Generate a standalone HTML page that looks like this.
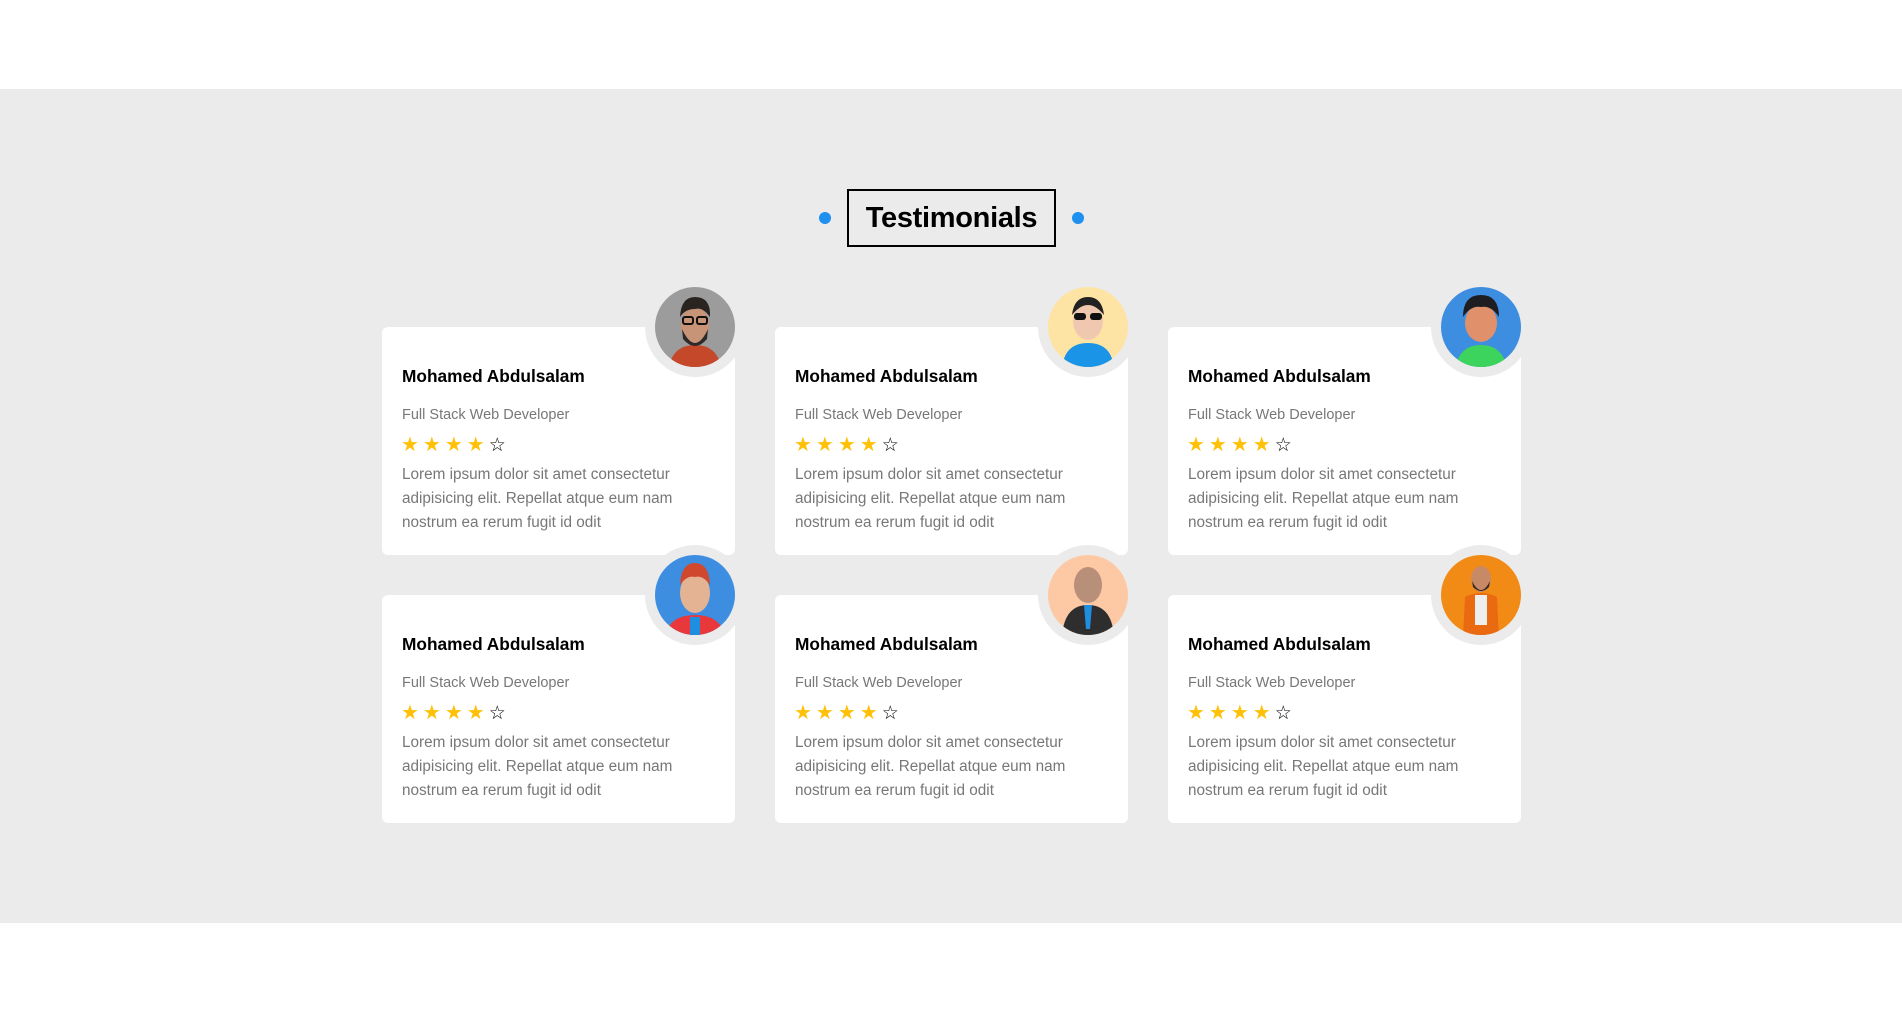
<!DOCTYPE html>
<html><head><meta charset="utf-8"><style>
*{margin:0;padding:0;box-sizing:border-box}
body{width:1902px;height:1022px;background:#fff;font-family:"Liberation Sans",sans-serif;position:relative;overflow:hidden}
.sec{position:absolute;left:0;top:89px;width:1902px;height:834px;background:#ebebeb}
.title{position:absolute;left:847px;top:189px;width:209px;height:58px;border:2px solid #000;font-size:29px;font-weight:bold;text-align:center;line-height:54px;color:#000;letter-spacing:-0.3px}
.dot{position:absolute;width:12px;height:12px;border-radius:50%;background:#1e90f0;top:212px}
.card{position:absolute;width:353px;height:228px;background:#fff;border-radius:6px}
.ring{position:absolute;left:263px;top:-50px;width:100px;height:100px;border-radius:50%;background:#ebebeb}
.ring svg{position:absolute;left:10px;top:10px}
.name{position:absolute;left:20px;top:39px;font-size:17.3px;font-weight:bold;color:#000}
.job{position:absolute;left:20px;top:80px;font-size:14.5px;color:#777}
.stars{position:absolute;left:19px;top:107px;font-size:20px;letter-spacing:4px;color:#ffc107;line-height:22px}
.stars b{color:#000;font-weight:normal;font-size:19px}
.p{position:absolute;left:20px;top:136px;width:290px;font-size:15.3px;line-height:24px;color:#777}
</style></head><body>
<div class="sec"></div>
<div class="dot" style="left:819px"></div>
<div class="title">Testimonials</div>
<div class="dot" style="left:1072px"></div>

<div class="card" style="left:382px;top:327px">
<div class="ring"><svg width="80" height="80" viewBox="0 0 80 80"><defs><clipPath id="c1"><circle cx="40" cy="40" r="40"/></clipPath></defs><g clip-path="url(#c1)"><rect width="80" height="80" fill="#9c9c9c"/><path d="M14 80 Q18 58 40 58 Q62 58 66 80Z" fill="#c5482b"/><ellipse cx="40" cy="38" rx="14" ry="18" fill="#c89477"/><path d="M27 42 Q40 70 53 42 L52 52 Q40 66 28 52Z" fill="#2d2a28"/><path d="M25 30 Q26 10 40 10 Q56 10 55 30 Q48 20 40 22 Q30 22 25 30Z" fill="#2a2420"/><rect x="28" y="30" width="10" height="7" rx="2" fill="none" stroke="#111" stroke-width="2"/><rect x="42" y="30" width="10" height="7" rx="2" fill="none" stroke="#111" stroke-width="2"/></g></svg></div>
<div class="name">Mohamed Abdulsalam</div><div class="job">Full Stack Web Developer</div>
<div class="stars">★★★★<b>☆</b></div>
<div class="p">Lorem ipsum dolor sit amet consectetur adipisicing elit. Repellat atque eum nam nostrum ea rerum fugit id odit</div></div>

<div class="card" style="left:775px;top:327px">
<div class="ring"><svg width="80" height="80" viewBox="0 0 80 80"><defs><clipPath id="c2"><circle cx="40" cy="40" r="40"/></clipPath></defs><g clip-path="url(#c2)"><rect width="80" height="80" fill="#fde3a4"/><path d="M14 82 Q16 56 40 56 Q64 56 66 82Z" fill="#1a94e6"/><ellipse cx="40" cy="34" rx="15" ry="19" fill="#f0c8b0"/><path d="M24 28 Q26 10 40 10 Q54 10 56 28 Q48 18 40 18 Q32 18 24 28Z" fill="#222"/><rect x="26" y="26" width="12" height="7" rx="3" fill="#111"/><rect x="42" y="26" width="12" height="7" rx="3" fill="#111"/></g></svg></div>
<div class="name">Mohamed Abdulsalam</div><div class="job">Full Stack Web Developer</div>
<div class="stars">★★★★<b>☆</b></div>
<div class="p">Lorem ipsum dolor sit amet consectetur adipisicing elit. Repellat atque eum nam nostrum ea rerum fugit id odit</div></div>

<div class="card" style="left:1168px;top:327px">
<div class="ring"><svg width="80" height="80" viewBox="0 0 80 80"><defs><clipPath id="c3"><circle cx="40" cy="40" r="40"/></clipPath></defs><g clip-path="url(#c3)"><rect width="80" height="80" fill="#3d8ee0"/><path d="M14 82 Q18 58 40 58 Q62 58 66 82Z" fill="#3cd45c"/><ellipse cx="40" cy="36" rx="16" ry="19" fill="#e0906a"/><path d="M22 30 Q22 8 40 8 Q58 8 58 30 Q50 18 40 20 Q30 18 22 30Z" fill="#1e1e22"/></g></svg></div>
<div class="name">Mohamed Abdulsalam</div><div class="job">Full Stack Web Developer</div>
<div class="stars">★★★★<b>☆</b></div>
<div class="p">Lorem ipsum dolor sit amet consectetur adipisicing elit. Repellat atque eum nam nostrum ea rerum fugit id odit</div></div>

<div class="card" style="left:382px;top:595px">
<div class="ring"><svg width="80" height="80" viewBox="0 0 80 80"><defs><clipPath id="c4"><circle cx="40" cy="40" r="40"/></clipPath></defs><g clip-path="url(#c4)"><rect width="80" height="80" fill="#3d8ee0"/><path d="M10 82 Q14 60 40 60 Q66 60 70 82Z" fill="#e8383c"/><rect x="35" y="62" width="10" height="20" fill="#1e8fe0"/><ellipse cx="40" cy="38" rx="15" ry="20" fill="#e3b394"/><path d="M25 30 Q26 8 40 8 Q54 8 55 30 Q48 20 40 22 Q32 20 25 30Z" fill="#d0492e"/></g></svg></div>
<div class="name">Mohamed Abdulsalam</div><div class="job">Full Stack Web Developer</div>
<div class="stars">★★★★<b>☆</b></div>
<div class="p">Lorem ipsum dolor sit amet consectetur adipisicing elit. Repellat atque eum nam nostrum ea rerum fugit id odit</div></div>

<div class="card" style="left:775px;top:595px">
<div class="ring"><svg width="80" height="80" viewBox="0 0 80 80"><defs><clipPath id="c5"><circle cx="40" cy="40" r="40"/></clipPath></defs><g clip-path="url(#c5)"><rect width="80" height="80" fill="#fdc8a4"/><path d="M14 82 Q16 50 40 50 Q64 50 66 82Z" fill="#2e2e2e"/><path d="M36 50 L44 50 L42 74 L38 74Z" fill="#1e8fe0"/><ellipse cx="40" cy="30" rx="14" ry="18" fill="#b88f78"/></g></svg></div>
<div class="name">Mohamed Abdulsalam</div><div class="job">Full Stack Web Developer</div>
<div class="stars">★★★★<b>☆</b></div>
<div class="p">Lorem ipsum dolor sit amet consectetur adipisicing elit. Repellat atque eum nam nostrum ea rerum fugit id odit</div></div>

<div class="card" style="left:1168px;top:595px">
<div class="ring"><svg width="80" height="80" viewBox="0 0 80 80"><defs><clipPath id="c6"><circle cx="40" cy="40" r="40"/></clipPath></defs><g clip-path="url(#c6)"><rect width="80" height="80" fill="#f28a16"/><path d="M22 82 L24 42 Q40 34 56 42 L58 82Z" fill="#ea6a12"/><rect x="34" y="40" width="12" height="30" fill="#eee"/><ellipse cx="40" cy="24" rx="10" ry="13" fill="#c88a66"/><path d="M31 26 Q40 44 49 26 L48 32 Q40 40 32 32Z" fill="#3a2a20"/></g></svg></div>
<div class="name">Mohamed Abdulsalam</div><div class="job">Full Stack Web Developer</div>
<div class="stars">★★★★<b>☆</b></div>
<div class="p">Lorem ipsum dolor sit amet consectetur adipisicing elit. Repellat atque eum nam nostrum ea rerum fugit id odit</div></div>
</body></html>
